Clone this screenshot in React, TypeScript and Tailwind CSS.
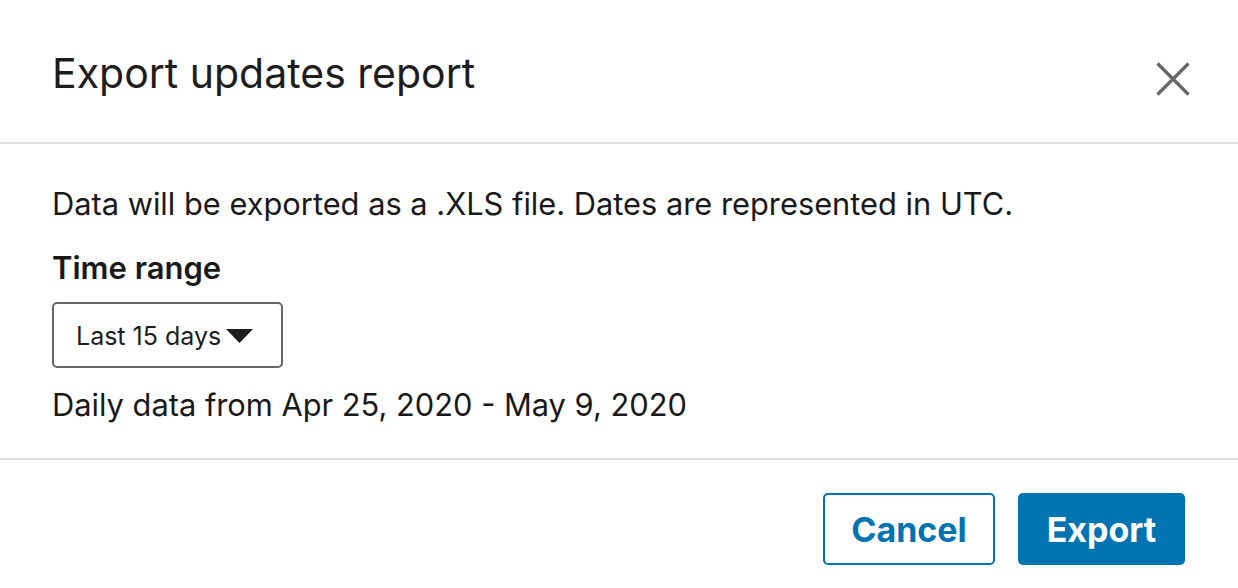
export default function App() {
  return (
    <div className="w-full h-[588px] bg-white font-['Inter','Liberation_Sans',Arial,sans-serif] text-[#191919]">
      {/* header */}
      <div className="h-[144px] flex items-start justify-between border-b-2 border-[#e0e0e0] pl-[52px] pr-[48px]">
        <h2 className="mt-[53px] text-[41px] leading-[41px] text-[#1d1d1d]">Export updates report</h2>
        <button className="mt-[62px] w-[34px] h-[34px]" aria-label="Dismiss">
          <svg width="34" height="34" viewBox="0 0 34 34">
            <path d="M1.5 1.5 L32.5 32.5 M32.5 1.5 L1.5 32.5" stroke="#666666" strokeWidth="3.2" strokeLinecap="butt" />
          </svg>
        </button>
      </div>

      {/* body */}
      <div className="h-[316px] border-b-2 border-[#e0e0e0] px-[52px] pt-[44px]">
        <p className="text-[30.8px] leading-[31px]">
          Data will be exported as a .XLS file. Dates are represented in UTC.
        </p>
        <div className="mt-[33px] text-[31px] leading-[31px] font-semibold">Time range</div>
        <button className="mt-[19px] w-[231px] h-[66px] border-2 border-[#666666] rounded-[5px] flex items-center pl-[22px] pt-[3px] text-[25px] text-[#1d1d1d]">
          <span>Last 15 days</span>
          <svg className="ml-[5px] -mt-[1px]" width="27" height="14" viewBox="0 0 27 14">
            <path d="M0 0 H27 L13.5 14 Z" fill="#1d1d1d" />
          </svg>
        </button>
        <p className="mt-[21px] text-[30.8px] leading-[31px]">Daily data from Apr 25, 2020 - May 9, 2020</p>
      </div>

      {/* footer */}
      <div className="flex justify-end gap-[23px] pt-[33px] pr-[53px]">
        <button className="w-[172px] h-[72px] rounded-[5px] border-2 border-[#0073b1] text-[#0073b1] text-[34px] font-bold">
          Cancel
        </button>
        <button className="w-[167px] h-[72px] rounded-[5px] bg-[#0073b1] text-white text-[34px] font-bold">
          Export
        </button>
      </div>
    </div>
  );
}
